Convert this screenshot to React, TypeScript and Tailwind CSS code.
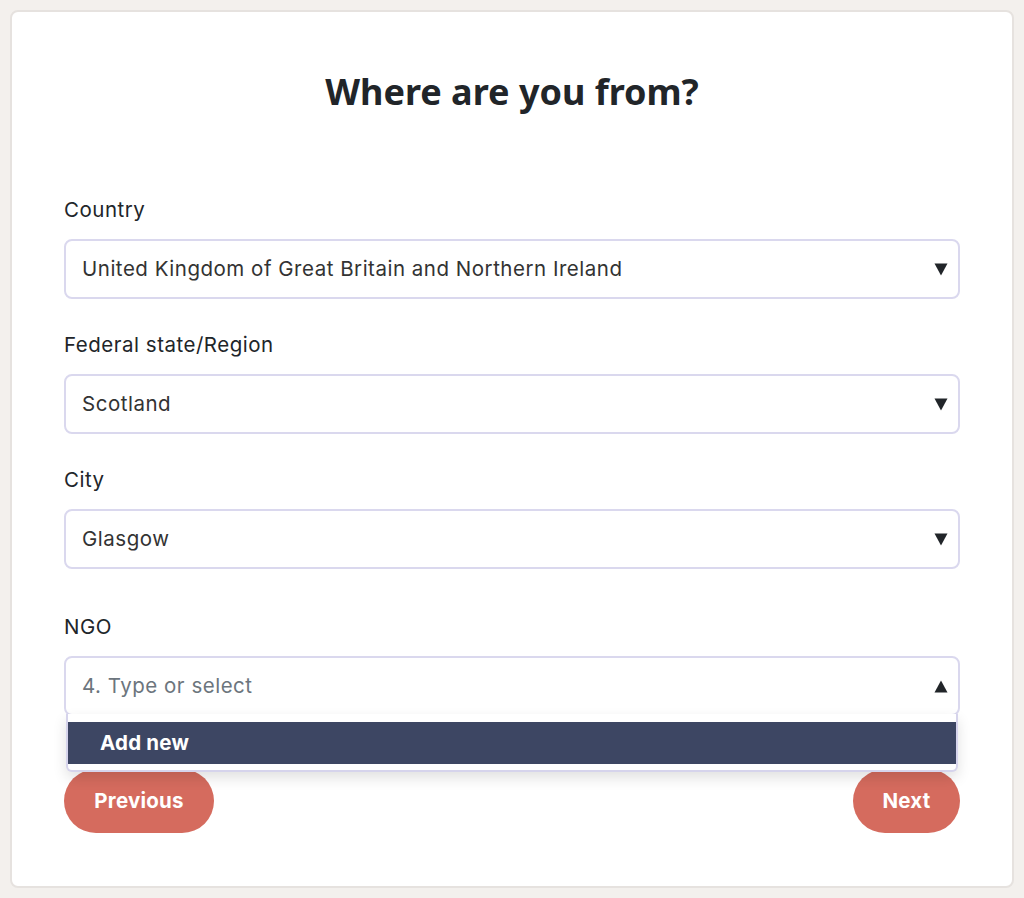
import { ReactNode } from "react";

function Caret({ up }: { up?: boolean }) {
  return (
    <svg width="14" height="13" viewBox="0 0 14 13" className="shrink-0">
      {up ? <path d="M7 0.5 L13.5 12.5 L0.5 12.5 Z" fill="#212529" /> : <path d="M0.5 0.5 L13.5 0.5 L7 12.5 Z" fill="#212529" />}
    </svg>
  );
}

function Field({ label, children, className = "" }: { label: string; children: ReactNode; className?: string }) {
  return (
    <div className={className}>
      <label className="block text-[20.5px] tracking-[0.025em] leading-[24px] text-[#212529] mb-[17px]">{label}</label>
      {children}
    </div>
  );
}

function SelectBox({ value }: { value: string }) {
  return (
    <div className="h-[60px] rounded-[8px] border-2 border-[#dad8ee] bg-white flex items-center justify-between pl-[16px] pr-[10px]">
      <span className="text-[20.5px] tracking-[0.025em] text-[#333333]">{value}</span>
      <Caret />
    </div>
  );
}

export default function App() {
  return (
    <div className="min-h-[898px] bg-[#f3f0ed] p-[10px]" style={{ fontFamily: "Inter, 'Noto Sans', sans-serif" }}>
      <div className="h-[878px] bg-white rounded-[8px] border-2 border-[#e6e2df] px-[52px] pt-[58px]">
        <h1 className="text-center text-[36px] leading-[44px] font-bold text-[#212529] mb-[84px]" style={{ fontFamily: "'Noto Sans', sans-serif" }}>
          Where are you from?
        </h1>

        <Field label="Country">
          <SelectBox value="United Kingdom of Great Britain and Northern Ireland" />
        </Field>
        <Field label="Federal state/Region" className="mt-[34px]">
          <SelectBox value="Scotland" />
        </Field>
        <Field label="City" className="mt-[34px]">
          <SelectBox value="Glasgow" />
        </Field>
        <Field label="NGO" className="mt-[46px]">
          <div className="relative">
            <div className="h-[60px] rounded-[8px] border-2 border-[#dad8ee] bg-white flex items-center justify-between pl-[16px] pr-[10px]">
              <span className="text-[20.5px] tracking-[0.025em] text-[#6c757d]">4. Type or select</span>
              <Caret up />
            </div>
            <div className="absolute left-[2px] right-[2px] top-[58px] z-10 bg-white border-2 border-t-0 border-[#d6d4ec] rounded-b-[6px] pt-[8px] pb-[6px] shadow-[0_6px_14px_rgba(0,0,0,0.12)]">
              <div className="h-[42px] bg-[#3d4663] flex items-center pl-[32px] text-[20.5px] tracking-[0.01em] font-bold text-white">Add new</div>
            </div>
          </div>
        </Field>

        <div className="flex justify-between mt-[53px]">
          <button className="h-[64px] w-[150px] rounded-full bg-[#d56b5e] text-white text-[20.5px] tracking-[0.01em] font-bold">Previous</button>
          <button className="h-[64px] w-[107px] rounded-full bg-[#d56b5e] text-white text-[20.5px] tracking-[0.01em] font-bold">Next</button>
        </div>
      </div>
    </div>
  );
}
